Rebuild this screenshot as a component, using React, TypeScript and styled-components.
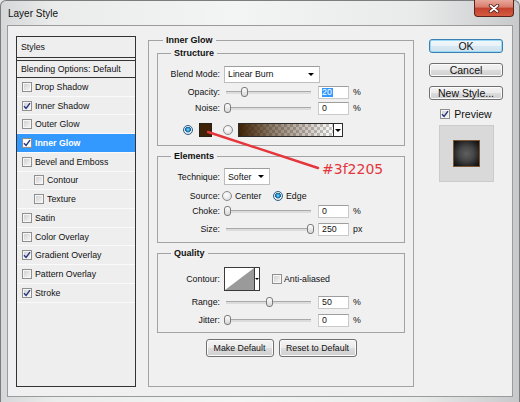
import React from 'react';
import styled, { createGlobalStyle } from 'styled-components';

const GlobalStyle = createGlobalStyle`
  html, body { margin: 0; padding: 0; }
  body {
    background: #e6e6e6;
    font-family: "Liberation Sans", Arial, sans-serif;
    color: #111;
  }
  *, *::before, *::after { box-sizing: border-box; }
`;

const Screen = styled.div`
  position: relative;
  width: 520px;
  height: 402px;
  overflow: hidden;
`;

const Frame = styled.div`
  width: 520px;
  height: 402px;
  display: flex;
  flex-direction: column;
  padding: 0 6px 5px;
  border: 1px solid #7d7d7d;
  border-bottom: none;
  border-radius: 6px 6px 0 0;
  background: linear-gradient(to right, #d6d7d8 0%, #eaebeb 10%, #f3f4f4 45%, #e9eaea 80%, #c8c9ca 100%);
`;

const TitleBar = styled.div`
  height: 24px;
  display: flex;
  justify-content: space-between;
  align-items: flex-start;
  flex: none;
`;

const Title = styled.div`
  padding: 7px 0 0 1px;
  font-size: 10px;
  line-height: 12px;
  color: #111;
`;

const CloseButton = styled.div`
  width: 40px;
  height: 17px;
  margin: -1px -1px 0 0;
  display: flex;
  align-items: center;
  justify-content: center;
  border: 1px solid #5b231c;
  border-top: none;
  border-radius: 0 0 4px 4px;
  background: linear-gradient(#e8a89d 0%, #d77b6b 45%, #c3402d 50%, #d45b41 100%);
`;

const Client = styled.div`
  flex: 1;
  display: flex;
  background: #f0f0f0;
  border: 1px solid #9b9b9b;
  padding: 8px 9px 9px 8px;
`;

/* ---------- left styles list ---------- */

const StyleList = styled.div`
  width: 120px;
  flex: none;
  margin-top: 2px;
  display: flex;
  flex-direction: column;
  border: 1px solid #333;
  background: #eeeeee;
  font-size: 8.8px;
`;

const ListHeader = styled.div`
  height: 21px;
  line-height: 20px;
  padding-left: 4px;
  border-bottom: 1px solid #333;
`;

const BlendingRow = styled.div`
  height: 18px;
  margin-top: 2px;
  line-height: 16px;
  padding-left: 4px;
  border-top: 1px solid #333;
  border-bottom: 1px solid #333;
`;

const StyleItem = styled.div<{ $indent?: boolean; $active?: boolean }>`
  height: 18.73px;
  flex: none;
  display: flex;
  align-items: center;
  gap: 3px;
  padding-left: ${p => (p.$indent ? 17 : 5)}px;
  border-bottom: 1px solid #fafafa;
  background: ${p => (p.$active ? '#3399ff' : 'transparent')};
  color: ${p => (p.$active ? '#fff' : '#111')};
  font-weight: ${p => (p.$active ? 'bold' : 'normal')};
  white-space: nowrap;
`;

const CheckBox = styled.span<{ $white?: boolean }>`
  width: 10px;
  height: 10px;
  flex: none;
  display: flex;
  align-items: center;
  justify-content: center;
  border: 1px solid #8e8f8f;
  box-shadow: inset 0 0 0 1px #f6f6f6;
  background: ${p => (p.$white ? '#fff' : 'linear-gradient(135deg, #cdcdcd, #f8f8f8)')};
`;

const Tick = () => (
  <svg width="8" height="8" viewBox="0 0 8 8">
    <path d="M1 4.2 L3.1 6.5 L7 1.2" fill="none" stroke="#27367f" strokeWidth="1.4" />
  </svg>
);

/* ---------- group boxes ---------- */

const GroupBox = styled.fieldset<{ $pad: string; $mt?: number }>`
  margin: ${p => p.$mt ?? 0}px 0 0;
  padding: ${p => p.$pad};
  border: 1px solid #a3a3a3;
  min-width: 0;
`;

const GroupTitle = styled.legend<{ $offset: number }>`
  margin-left: ${p => p.$offset}px;
  padding: 0 3px;
  font-size: 9px;
  font-weight: bold;
  line-height: 12px;
  color: #111;
`;

const EffectPanel = styled(GroupBox)`
  width: 266px;
  flex: none;
  margin: 0 0 0 12px;
  display: flex;
  flex-direction: column;
`;

const Row = styled.div<{ $h: number; $mt?: number }>`
  display: flex;
  align-items: center;
  height: ${p => p.$h}px;
  margin-top: ${p => p.$mt ?? 0}px;
  font-size: 8.8px;
  color: #111;
  white-space: nowrap;
`;

const Label = styled.span`
  width: 62px;
  flex: none;
  margin-right: 4px;
  text-align: right;
`;

const Dropdown = styled.div<{ $w: number }>`
  width: ${p => p.$w}px;
  height: 17px;
  flex: none;
  display: flex;
  align-items: center;
  justify-content: space-between;
  padding: 0 5px 0 3px;
  background: #fff;
  border: 1px solid #bdbdbd;
  border-top-color: #9d9d9d;
`;

const DownArrow = styled.span`
  width: 0;
  height: 0;
  border-left: 3px solid transparent;
  border-right: 3px solid transparent;
  border-top: 3px solid #000;
`;

const Slider = styled.div`
  position: relative;
  width: 90px;
  height: 12px;
  flex: none;
  &::before {
    content: '';
    position: absolute;
    left: 2px;
    right: 3px;
    top: 5px;
    height: 3px;
    background: #dcdcdc;
    border-top: 1px solid #a9a9a9;
  }
`;

const Thumb = styled.span`
  position: absolute;
  top: 1px;
  width: 7px;
  height: 10px;
  border: 1px solid #7a7a7a;
  border-radius: 3px;
  background: linear-gradient(#fdfdfd, #d6d6d6);
`;

const NumberBox = styled.div`
  width: 31px;
  height: 13px;
  flex: none;
  margin-left: 4px;
  display: flex;
  align-items: center;
  padding-left: 3px;
  background: #fff;
  border: 1px solid #cacaca;
  border-top-color: #9e9e9e;
`;

const Highlight = styled.span`
  background: #3399ff;
  color: #fff;
  line-height: 9px;
  padding: 0 1px 0 0;
`;

const Unit = styled.span`
  margin-left: 4px;
`;

const Radio = styled.span<{ $on?: boolean }>`
  width: 10px;
  height: 10px;
  flex: none;
  border-radius: 50%;
  border: 1px solid ${p => (p.$on ? '#2b5f86' : '#8a8a8a')};
  background: ${p =>
    p.$on
      ? 'radial-gradient(circle at 50% 45%, #8fe0ff 0, #2a9ad8 25%, #1a5e92 45%, #e9eef2 52%, #cfd4d8 100%)'
      : 'radial-gradient(circle at 40% 35%, #ffffff 0, #f1f1f1 35%, #d3d3d3 100%)'};
`;

const Swatch = styled.span`
  width: 13px;
  height: 14px;
  flex: none;
  margin-left: 6px;
  background: #3f2205;
  border: 1px solid #262017;
`;

const GradientPicker = styled.div`
  width: 105px;
  height: 14px;
  flex: none;
  margin-left: 5px;
  display: flex;
  border: 1px solid #2b2b2b;
`;

const GradientFill = styled.div`
  flex: 1;
  background:
    linear-gradient(to right, #3f2205 0%, rgba(63, 34, 5, 0.6) 35%, rgba(63, 34, 5, 0) 100%),
    repeating-conic-gradient(#c9c9c9 0 25%, #ffffff 0 50%) 0 0 / 6px 6px;
`;

const PickerArrow = styled.div`
  width: 9px;
  flex: none;
  display: flex;
  align-items: center;
  justify-content: center;
  background: #fff;
  border-left: 1px solid #2b2b2b;
`;

const RadioOption = styled.span<{ $w?: number; $ml?: number }>`
  display: flex;
  align-items: center;
  gap: 3px;
  width: ${p => (p.$w ? `${p.$w}px` : 'auto')};
  margin-left: ${p => p.$ml ?? 0}px;
`;

const ContourPicker = styled.div`
  height: 24px;
  flex: none;
  display: flex;
  background: #fff;
  border: 1px solid #3a3a3a;
`;

const ContourArrow = styled.div`
  width: 5px;
  display: flex;
  align-items: center;
  justify-content: center;
  border-left: 1px solid #3a3a3a;
  & > span {
    border-left-width: 2px;
    border-right-width: 2px;
    border-top-width: 2.5px;
  }
`;

const CheckOption = styled.span`
  display: flex;
  align-items: center;
  gap: 2px;
  margin-left: 12px;
`;

const ButtonRow = styled.div`
  display: flex;
  justify-content: center;
  gap: 5px;
  margin-top: 6px;
`;

const PushButton = styled.div<{ $w: number }>`
  width: ${p => p.$w}px;
  height: 18px;
  display: flex;
  align-items: center;
  justify-content: center;
  font-size: 8.8px;
  color: #111;
  border: 1px solid #707070;
  border-radius: 3px;
  box-shadow: inset 0 0 0 1px #fbfbfb;
  background: linear-gradient(#f3f3f3 0%, #ebebeb 50%, #dddddd 50%, #cfcfcf 100%);
`;

/* ---------- right column ---------- */

const SideColumn = styled.div`
  width: 74px;
  flex: none;
  margin: 5px 0 0 15px;
  display: flex;
  flex-direction: column;
  align-items: center;
`;

const ButtonStack = styled.div`
  display: flex;
  flex-direction: column;
  gap: 9.5px;
`;

const DialogButton = styled.div<{ $default?: boolean }>`
  width: 74px;
  height: 14px;
  display: flex;
  align-items: center;
  justify-content: center;
  font-size: 10.5px;
  color: #111;
  border: 1px solid ${p => (p.$default ? '#3c7fb1' : '#707070')};
  border-radius: 3px;
  box-shadow: inset 0 0 0 1px ${p => (p.$default ? '#9ad9f5' : '#fbfbfb')};
  background: ${p =>
    p.$default
      ? 'linear-gradient(#f2f8fb 0%, #e8f2f8 50%, #d8e8f2 50%, #cfe2ef 100%)'
      : 'linear-gradient(#f3f3f3 0%, #ebebeb 50%, #dddddd 50%, #cfcfcf 100%)'};
`;

const PreviewToggle = styled.div`
  height: 12px;
  margin-top: 8px;
  display: flex;
  align-items: center;
  gap: 4px;
  font-size: 10.5px;
`;

const PreviewWell = styled.div`
  width: 55px;
  height: 57px;
  margin-top: 5px;
  display: flex;
  align-items: center;
  justify-content: center;
  background: #d9d9d9;
  border: 1px solid #cbcbcb;
`;

const PreviewChip = styled.div`
  width: 27px;
  height: 27px;
  border: 1px solid #7a5634;
  background: radial-gradient(circle at 50% 50%, #5f5f5f 0%, #474747 40%, #1f1f1f 78%, #0c0c0c 100%);
`;

/* ---------- annotation ---------- */

const Annotation = styled.svg`
  position: absolute;
  left: 0;
  top: 0;
  pointer-events: none;
`;

const HexNote = styled.span`
  position: absolute;
  left: 322px;
  top: 161px;
  font-family: "DejaVu Sans", sans-serif;
  font-size: 14px;
  line-height: 16px;
  color: #e4363c;
  pointer-events: none;
`;

const styleItems = [
  { label: 'Drop Shadow', checked: false },
  { label: 'Inner Shadow', checked: true },
  { label: 'Outer Glow', checked: false },
  { label: 'Inner Glow', checked: true, active: true },
  { label: 'Bevel and Emboss', checked: false },
  { label: 'Contour', checked: false, indent: true },
  { label: 'Texture', checked: false, indent: true },
  { label: 'Satin', checked: false },
  { label: 'Color Overlay', checked: false },
  { label: 'Gradient Overlay', checked: true },
  { label: 'Pattern Overlay', checked: false },
  { label: 'Stroke', checked: true },
];

interface SliderRowProps {
  label: string;
  pct: number;
  value: string;
  unit: string;
  h: number;
  mt?: number;
  selected?: boolean;
}

const SliderRow: React.FC<SliderRowProps> = ({ label, pct, value, unit, h, mt, selected }) => (
  <Row $h={h} $mt={mt}>
    <Label>{label}</Label>
    <Slider>
      <Thumb style={{ left: pct * 83 }} />
    </Slider>
    <NumberBox>{selected ? <Highlight>{value}</Highlight> : value}</NumberBox>
    <Unit>{unit}</Unit>
  </Row>
);

const App: React.FC = () => {
  return (
    <Screen>
      <GlobalStyle />
      <Frame>
        <TitleBar>
          <Title>Layer Style</Title>
          <CloseButton>
            <svg width="12" height="9" viewBox="0 0 12 9">
              <path d="M2.5 1.5 L9.5 7.5 M9.5 1.5 L2.5 7.5" stroke="#4a1812" strokeWidth="3.4" strokeLinecap="round" />
              <path d="M2.5 1.5 L9.5 7.5 M9.5 1.5 L2.5 7.5" stroke="#fff" strokeWidth="1.8" strokeLinecap="round" />
            </svg>
          </CloseButton>
        </TitleBar>

        <Client>
          <StyleList>
            <ListHeader>Styles</ListHeader>
            <BlendingRow>Blending Options: Default</BlendingRow>
            {styleItems.map(item => (
              <StyleItem key={item.label} $indent={item.indent} $active={item.active}>
                <CheckBox $white={item.active}>{item.checked && <Tick />}</CheckBox>
                {item.label}
              </StyleItem>
            ))}
          </StyleList>

          <EffectPanel $pad="1px 8px 0 8px">
            <GroupTitle $offset={6}>Inner Glow</GroupTitle>

            <GroupBox $pad="5px 0 7px 0">
              <GroupTitle $offset={13}>Structure</GroupTitle>
              <Row $h={20}>
                <Label>Blend Mode:</Label>
                <Dropdown $w={96}>
                  Linear Burn
                  <DownArrow />
                </Dropdown>
              </Row>
              <SliderRow label="Opacity:" pct={0.2} value="20" unit="%" h={16} selected />
              <SliderRow label="Noise:" pct={0} value="0" unit="%" h={16} />
              <Row $h={16} $mt={6} style={{ paddingLeft: 25 }}>
                <Radio $on />
                <Swatch />
                <Radio style={{ marginLeft: 11 }} />
                <GradientPicker>
                  <GradientFill />
                  <PickerArrow>
                    <DownArrow />
                  </PickerArrow>
                </GradientPicker>
              </Row>
            </GroupBox>

            <GroupBox $pad="5px 0 4px 0" $mt={4}>
              <GroupTitle $offset={13}>Elements</GroupTitle>
              <Row $h={19}>
                <Label>Technique:</Label>
                <Dropdown $w={46}>
                  Softer
                  <DownArrow />
                </Dropdown>
              </Row>
              <Row $h={16} $mt={2}>
                <Label>Source:</Label>
                <RadioOption $w={51} $ml={-2}>
                  <Radio />
                  Center
                </RadioOption>
                <RadioOption>
                  <Radio $on />
                  Edge
                </RadioOption>
              </Row>
              <SliderRow label="Choke:" pct={0} value="0" unit="%" h={14} />
              <SliderRow label="Size:" pct={1} value="250" unit="px" h={18} mt={2} />
            </GroupBox>

            <GroupBox $pad="7px 0 4px 0" $mt={4}>
              <GroupTitle $offset={13}>Quality</GroupTitle>
              <Row $h={26}>
                <Label>Contour:</Label>
                <ContourPicker>
                  <svg width="29" height="22" viewBox="0 0 29 22">
                    <polygon points="0,22 29,0 29,22" fill="#9a9a9a" />
                  </svg>
                  <ContourArrow>
                    <DownArrow />
                  </ContourArrow>
                </ContourPicker>
                <CheckOption>
                  <CheckBox />
                  Anti-aliased
                </CheckOption>
              </Row>
              <SliderRow label="Range:" pct={0.5} value="50" unit="%" h={16} mt={2} />
              <SliderRow label="Jitter:" pct={0} value="0" unit="%" h={16} mt={2} />
            </GroupBox>

            <ButtonRow>
              <PushButton $w={68}>Make Default</PushButton>
              <PushButton $w={78}>Reset to Default</PushButton>
            </ButtonRow>
          </EffectPanel>

          <SideColumn>
            <ButtonStack>
              <DialogButton $default>OK</DialogButton>
              <DialogButton>Cancel</DialogButton>
              <DialogButton>New Style...</DialogButton>
            </ButtonStack>
            <PreviewToggle>
              <CheckBox>
                <Tick />
              </CheckBox>
              Preview
            </PreviewToggle>
            <PreviewWell>
              <PreviewChip />
            </PreviewWell>
          </SideColumn>
        </Client>
      </Frame>

      <Annotation width="520" height="402" viewBox="0 0 520 402">
        <line x1="208" y1="132" x2="318" y2="168" stroke="#e4363c" strokeWidth="2.4" strokeLinecap="round" />
      </Annotation>
      <HexNote>#3f2205</HexNote>
    </Screen>
  );
};

export default App;
